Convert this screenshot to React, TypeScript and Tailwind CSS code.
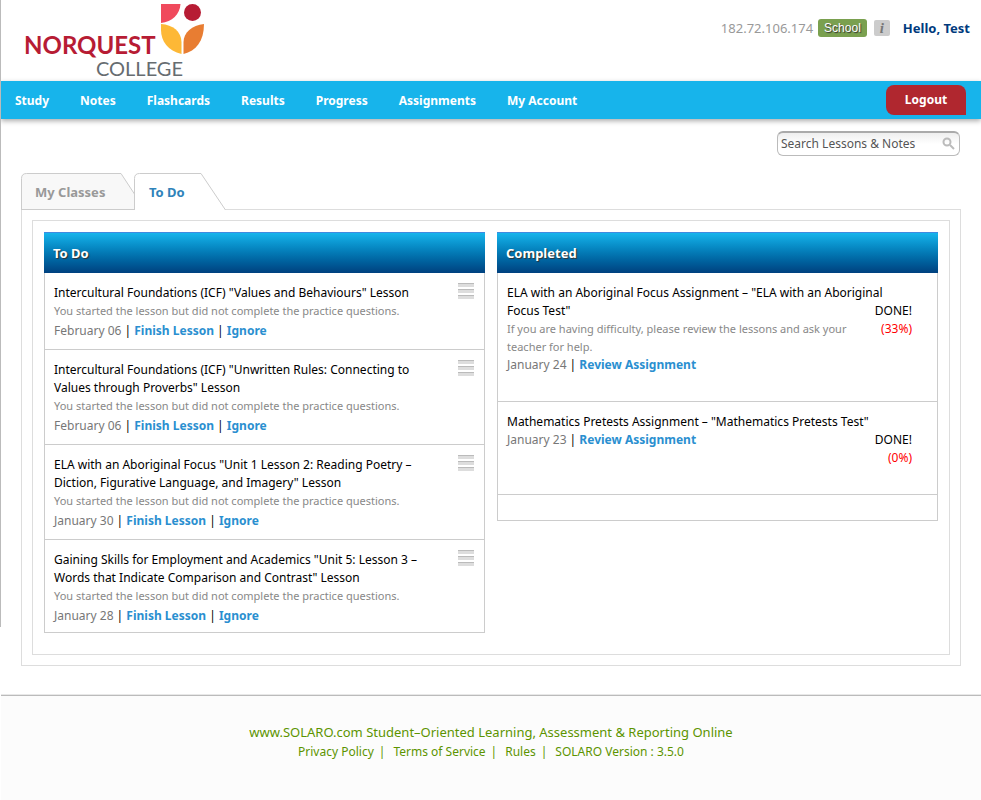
import React from "react";

const navItems = ["Study", "Notes", "Flashcards", "Results", "Progress", "Assignments", "My Account"];

const footerLinks = ["Privacy Policy", "Terms of Service", "Rules"];

const lessons = [
  { title: 'Intercultural Foundations (ICF) "Values and Behaviours" Lesson', date: "February 06" },
  { title: 'Intercultural Foundations (ICF) "Unwritten Rules: Connecting to Values through Proverbs" Lesson', date: "February 06" },
  { title: 'ELA with an Aboriginal Focus "Unit 1 Lesson 2: Reading Poetry – Diction, Figurative Language, and Imagery" Lesson', date: "January 30" },
  { title: 'Gaining Skills for Employment and Academics "Unit 5: Lesson 3 – Words that Indicate Comparison and Contrast" Lesson', date: "January 28" },
];

const completed = [
  {
    title: 'ELA with an Aboriginal Focus Assignment – "ELA with an Aboriginal Focus Test"',
    note: "If you are having difficulty, please review the lessons and ask your teacher for help.",
    date: "January 24",
    score: "(33%)",
  },
  { title: 'Mathematics Pretests Assignment – "Mathematics Pretests Test"', note: "", date: "January 23", score: "(0%)" },
];

function Logo() {
  return (
    <svg width="184" height="81" viewBox="0 0 184 81" role="img" aria-label="NorQuest College">
      <path d="M140 4h19.500C159 14 151 22 140 23z" fill="#f04a5d" />
      <circle cx="171.500" cy="12.500" r="8.500" fill="#b71c34" />
      <path d="M140 24C152 25 160 31 160.500 42V54C147 51 140 41 140 30z" fill="#fdb836" />
      <path d="M183 24C171 25 162.500 33 162.500 42V54C175 51 183 41 183 24z" fill="#e87d32" />
      <text x="3" y="54" fontSize="24" fontWeight="700" fill="#b71c34" fontFamily="Lato, sans-serif">NORQUEST</text>
      <text x="75" y="76" fontSize="20" fill="#666c70" fontFamily="Lato, sans-serif">COLLEGE</text>
    </svg>
  );
}

function DragHandle() {
  return (
    <span className="flex h-4 w-4 shrink-0 flex-col justify-between" aria-hidden="true">
      <span className="h-1 border-t border-[#bbb] bg-[#ddd]" />
      <span className="h-1 border-t border-[#bbb] bg-[#ddd]" />
      <span className="h-1 border-t border-[#bbb] bg-[#ddd]" />
    </span>
  );
}

function PanelHeading({ children }: { children: React.ReactNode }) {
  return (
    <h2 className="h-[41px] border-t border-[#3f8ae0] bg-linear-to-b from-[#16b4ec] to-[#00417f] px-[9px] text-[13px] leading-[41px] font-bold text-white [text-shadow:1px_1px_1px_#333]">
      {children}
    </h2>
  );
}

export default function App() {
  return (
    <div className="relative min-h-screen bg-white pl-px font-['Noto_Sans','Open_Sans',sans-serif] text-[12px] leading-[18px] text-black">
      <span className="absolute top-0 left-0 h-[627px] w-px bg-[#bbb]" aria-hidden="true" />
      <header className="flex h-[81px] justify-between pr-[11px] pl-5">
        <a href="#home"><Logo /></a>
        <div className="flex h-5 items-center self-start mt-[18px]">
          <span className="mr-[5px] text-[13px] text-[#999]">182.72.106.174</span>
          <span className="mr-[7px] h-[18px] rounded-[3px] bg-[#7aa04f] px-[6px] font-['Liberation_Sans',sans-serif] leading-[18px] text-white [text-shadow:1px_1px_1px_#333]">School</span>
          <button aria-label="Information" className="mr-[13px] h-4 w-4 rounded-[2px] bg-[#ccc] font-['Liberation_Serif',serif] text-[15px] leading-4 font-bold text-[#777] italic">i</button>
          <a href="#profile" className="text-[13px] font-bold text-[#003a7d]">Hello, Test</a>
        </div>
      </header>
      <nav className="flex h-[38px] items-center bg-[#17b4eb] pr-[15px] pl-[14px] shadow-[0_2px_5px_#aaa]">
        <div className="flex flex-1 gap-[31px] pt-px font-bold text-white">
          {navItems.map((n) => <a key={n} href="#nav">{n}</a>)}
        </div>
        <button className="h-[30px] w-20 rounded-[8px] rounded-br-none bg-[#b0272f] font-bold text-white">Logout</button>
      </nav>
      <div className="flex justify-end pt-3 pr-[21px]">
        <label className="flex h-[25px] w-[183px] items-center rounded-[6px] border border-t-2 border-[#bbb] border-t-[#aaa] bg-linear-to-b from-[#eee] to-white to-50% px-[3px]">
          <input aria-label="Search Lessons & Notes" defaultValue="Search Lessons & Notes" className="min-w-0 flex-1 bg-transparent text-[#555] outline-none" />
          <svg width="14" height="14" viewBox="0 0 14 14" fill="none" stroke="#bbb" strokeWidth="2" aria-hidden="true">
            <circle cx="5" cy="5" r="3.500" />
            <path d="M8 8l4 4" />
          </svg>
        </label>
      </div>
      <main className="px-5 pt-[17px]">
        <div role="tablist" className="flex h-[37px] text-[13px] text-[#999]">
          <div className="relative z-10 w-[113px]">
            <svg className="absolute top-0 left-0" width="206" height="37" fill="none" stroke="#ccc" aria-hidden="true">
              <path d="M0.500 37V5.500Q0.500 0.500 5.500 0.500H100L122 34V36.500H0.500" fill="#f8f8f8" />
              <path d="M113.500 37V5.500Q113.500 0.500 118.500 0.500H180L204.500 37" fill="#fff" />
            </svg>
            <button role="tab" aria-selected="false" className="relative h-[37px] pl-[14px] font-bold">My Classes</button>
          </div>
          <button role="tab" aria-selected="true" className="relative z-10 h-[37px] pl-[15px] font-bold text-[#2f83ba]">To Do</button>
        </div>
        <div className="-mt-px border border-[#ddd] p-[10px]">
          <div className="grid grid-cols-2 items-start gap-3 border border-[#ddd] px-[11px] pt-[11px] pb-[21px]">
            <section>
              <PanelHeading>To Do</PanelHeading>
              <ul className="border-x border-[#ccc]">
                {lessons.map((l) => (
                  <li key={l.title} className="flex items-start justify-between border-b border-[#ccc] pt-[10px] pr-[10px] pb-2 pl-[9px] last:pb-[6px]">
                    <div className="w-[385px] pt-px">
                      <h3>{l.title}</h3>
                      <p className="text-[11px] leading-[18px] text-[#888]">You started the lesson but did not complete the practice questions.</p>
                      <p className="pt-px leading-5">
                        <span className="text-[#777]">{l.date}</span> | <a href="#finish" className="font-bold text-[#2a8fd0]">Finish Lesson</a> | <a href="#ignore" className="font-bold text-[#2a8fd0]">Ignore</a>
                      </p>
                    </div>
                    <DragHandle />
                  </li>
                ))}
              </ul>
            </section>
            <section>
              <PanelHeading>Completed</PanelHeading>
              <ul className="border-x border-b border-[#ccc] pb-[25px]">
                {completed.map((c) => (
                  <li key={c.title} className="flow-root min-h-[93px] border-b border-[#ccc] pt-[11px] pr-[25px] pb-[27px] pl-[9px]">
                    <p className="float-right mt-[18px] text-right [shape-outside:border-box]">
                      DONE!<br /><span className="text-[#f00]">{c.score}</span>
                    </p>
                    <h3>{c.title}</h3>
                    {c.note && <p className="text-[11px] leading-[18px] text-[#888]">{c.note}</p>}
                    <p>
                      <span className="text-[#777]">{c.date}</span> | <a href="#review" className="font-bold text-[#2a8fd0]">Review Assignment</a>
                    </p>
                  </li>
                ))}
              </ul>
            </section>
          </div>
        </div>
      </main>
      <footer className="mt-[29px] h-[105px] border-t border-[#bbb] bg-[#fcfcfc] pt-[26px] text-center leading-5 text-[#5c9400] shadow-[0_-1px_0_#e8e8e8]">
        <p className="text-[13px] leading-5">www.SOLARO.com Student–Oriented Learning, Assessment &amp; Reporting Online</p>
        <p className="flex justify-center">
          {footerLinks.map((f) => (
            <span key={f}><a href="#footer">{f}</a><span className="mr-2 ml-[5px]">|</span></span>
          ))}
          <span>SOLARO Version : 3.5.0</span>
        </p>
      </footer>
    </div>
  );
}
